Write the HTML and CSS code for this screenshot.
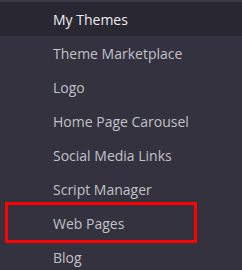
FILE: index.html
```html
<!DOCTYPE html>
<html>
<head>
<meta charset="utf-8">
<link rel="stylesheet" href="styles.css">
</head>
<body>
<ul class="menu">
  <li class="item active">My Themes</li>
  <li class="item">Theme Marketplace</li>
  <li class="item">Logo</li>
  <li class="item">Home Page Carousel</li>
  <li class="item">Social Media Links</li>
  <li class="item">Script Manager</li>
  <li class="item marked">Web Pages</li>
  <li class="item">Blog</li>
</ul>
</body>
</html>
```
FILE: styles.css
```css
html, body {
  margin: 0;
  padding: 0;
  background: #33323e;
  width: 242px;
  height: 270px;
  overflow: hidden;
}
.menu {
  list-style: none;
  margin: 0;
  padding: 0;
  border-top: 2px solid #3a3946;
  font-family: "Open Sans", sans-serif;
  font-size: 14px;
}
.item {
  position: relative;
  height: 34px;
  display: flex;
  align-items: center;
  padding-left: 53px;
  color: #c2c1c8;
}
.item.active {
  background: #292731;
  color: #ececee;
}
.item.marked::after {
  content: "";
  position: absolute;
  left: 5px;
  top: -4px;
  width: 186px;
  height: 35px;
  border: 3px solid #ff0000;
}
```
